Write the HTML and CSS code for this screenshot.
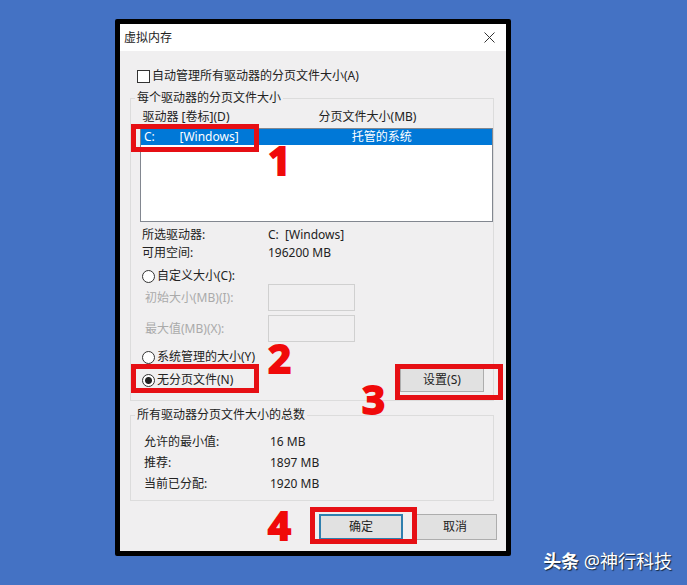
FILE: index.html
```html
<!DOCTYPE html>
<html lang="zh-CN">
<head>
    <meta charset="UTF-8">
    <title>虚拟内存</title>
    <link rel="stylesheet" href="styles.css">
</head>
<body>
<form class="dialog">
    <div class="title-bar">
        <span>虚拟内存</span>
        <button type="button" class="close" aria-label="关闭">
            <svg width="11" height="11" viewBox="0 0 11 11"><path d="M0.5 0.5L10.5 10.5M10.5 0.5L0.5 10.5" stroke="#333" fill="none"/></svg>
        </button>
    </div>
    <div class="content">
        <label class="option auto"><input type="checkbox">自动管理所有驱动器的分页文件大小(A)</label>

        <fieldset class="drives">
            <legend>每个驱动器的分页文件大小</legend>
            <div class="inner">
                <div class="marked">
                    <table class="drive-list">
                        <colgroup><col class="col-letter"><col class="col-label"><col></colgroup>
                        <thead>
                            <tr><th class="drive" colspan="2">驱动器 [卷标](D)</th><th>分页文件大小(MB)</th></tr>
                        </thead>
                        <tbody>
                            <tr class="selected"><td>C:</td><td>[Windows]</td><td class="size">托管的系统</td></tr>
                            <tr class="empty"><td colspan="3"></td></tr>
                        </tbody>
                    </table>
                    <div class="mark mark-drive"></div>
                    <span class="step step-1">1</span>
                </div>

                <dl class="info">
                    <dt>所选驱动器:</dt><dd>C:&nbsp; [Windows]</dd>
                    <dt>可用空间:</dt><dd>196200 MB</dd>
                </dl>

                <label class="option custom"><input type="radio" name="mode">自定义大小(C):</label>
                <div class="sizes">
                    <label for="initial">初始大小(MB)(I):</label><input type="text" id="initial" disabled>
                    <label for="maximum">最大值(MB)(X):</label><input type="text" id="maximum" disabled>
                </div>
                <label class="option managed"><input type="radio" name="mode">系统管理的大小(Y)</label>
                <div class="last-row">
                    <div class="marked">
                        <label class="option"><input type="radio" name="mode" checked>无分页文件(N)</label>
                        <div class="mark mark-none"></div>
                        <span class="step step-2">2</span>
                    </div>
                    <div class="marked">
                        <button type="button">设置(S)</button>
                        <div class="mark mark-set"></div>
                        <span class="step step-3">3</span>
                    </div>
                </div>
            </div>
        </fieldset>

        <fieldset class="totals">
            <legend>所有驱动器分页文件大小的总数</legend>
            <dl class="info">
                <dt>允许的最小值:</dt><dd>16 MB</dd>
                <dt>推荐:</dt><dd>1897 MB</dd>
                <dt>当前已分配:</dt><dd>1920 MB</dd>
            </dl>
        </fieldset>

        <div class="buttons">
            <div class="marked">
                <button type="button" class="default">确定</button>
                <div class="mark mark-ok"></div>
                <span class="step step-4">4</span>
            </div>
            <button type="button">取消</button>
        </div>
    </div>
</form>
<div class="watermark"><b>头条</b> @神行科技</div>
</body>
</html>
```
FILE: styles.css
```css
* {
    box-sizing: border-box;
}
body {
    margin: 0;
    padding: 19px 176px 28px 115px;
    background: #4472c4;
    color: #222;
    font-family: "Noto Sans", "Noto Sans CJK SC", sans-serif;
    font-size: 12px;
    line-height: 16px;
}
.dialog {
    border: 5px solid #000;
    border-radius: 2px;
    background: #f0eff0;
}
.title-bar {
    display: flex;
    justify-content: space-between;
    align-items: center;
    height: 27px;
    padding: 0 11px 0 4px;
    background: #fff;
}
.title-bar .close {
    display: flex;
    width: auto;
    height: auto;
    padding: 0;
    border: none;
    background: none;
}
.content {
    padding: 17px 9px 11px 10px;
}
.option {
    display: flex;
    align-items: center;
    gap: 2px;
    height: 16px;
    white-space: nowrap;
}
.option input {
    appearance: none;
    width: 13px;
    height: 13px;
    margin: 0;
    border: 1px solid #333;
    background: #fff;
}
.option input[type="radio"] {
    border-radius: 50%;
}
.option input[type="radio"]:checked {
    background: radial-gradient(circle, #222 3px, #fff 4px);
}
.auto {
    margin-left: 7px;
}

/* group boxes */
fieldset {
    min-width: 0;
    margin: 6px 3px 0 0;
    padding: 0 0 8px 4px;
    border: 1px solid #dcdcdc;
}
legend {
    padding: 0 2px;
}
.inner {
    margin-left: 5px;
}
.drive-list {
    width: 100%;
    border-collapse: collapse;
    table-layout: fixed;
}
.col-letter {
    width: 36px;
}
.col-label {
    width: 66px;
}
.drive-list th {
    height: 22px;
    padding: 0;
    font-weight: normal;
}
.drive-list .drive {
    padding-left: 2px;
    text-align: left;
}
.drive-list tbody {
    border: 1px solid #828790;
    background: #fff;
}
.drive-list td {
    padding: 0 3px;
}
.drive-list .selected {
    height: 16px;
    background: #0078d7;
    color: #fff;
}
.drive-list .size {
    padding-left: 32px;
    text-align: center;
}
.drive-list .empty {
    height: 77px;
}
.info {
    display: grid;
    grid-template-columns: 126px 1fr;
    grid-auto-rows: 18px;
    align-items: center;
    margin: 4px 0 0 2px;
}
.info dd {
    margin: 0;
}
.custom {
    margin: 6px 0 0 2px;
}
.sizes {
    display: grid;
    grid-template-columns: 123px 87px;
    grid-auto-rows: 27px;
    row-gap: 4px;
    align-items: center;
    margin-left: 5px;
    color: #aaa;
}
.sizes input {
    width: 100%;
    height: 27px;
    border: 1px solid #d0d0d0;
    background: #f0eff0;
}
.managed {
    margin: 7px 0 0 2px;
}
.last-row {
    display: flex;
    justify-content: space-between;
    align-items: center;
    margin: 3px 9px 0 2px;
}
.totals {
    padding-bottom: 6px;
}
.totals .info {
    grid-auto-rows: 21px;
    margin: 8px 0 0 9px;
}

button {
    width: 84px;
    height: 24px;
    padding: 0;
    border: 1px solid #adadad;
    background: #e1e1e1;
    color: #222;
    font: inherit;
}
.buttons {
    display: flex;
    justify-content: flex-end;
    gap: 10px;
    margin-top: 13px;
}
.buttons button {
    display: block;
    height: 26px;
}
.buttons .default {
    border: 2px solid #2f7fae;
}

/* red boxes and step numbers laid over the controls */
.marked {
    position: relative;
}
.mark {
    position: absolute;
    border: 5px solid #e60f14;
    pointer-events: none;
}
.mark-drive {
    top: 18px;
    left: -9px;
    width: 128px;
    height: 28px;
}
.mark-none {
    top: -8px;
    left: -11px;
    width: 128px;
    height: 29px;
}
.mark-set {
    top: -4px;
    right: -19px;
    width: 108px;
    height: 36px;
}
.mark-ok {
    inset: -7px -14px -4px -9px;
}
.step {
    position: absolute;
    color: #f00a0a;
    font-family: "Open Sans", sans-serif;
    font-size: 40px;
    font-weight: 700;
    line-height: 42px;
    -webkit-text-stroke: 2px #f00a0a;
}
.step-1 {
    top: 33px;
    left: 128px;
}
.step-2 {
    top: -35px;
    left: 126px;
}
.step-3 {
    top: 10px;
    left: -38px;
}
.step-4 {
    top: -10px;
    left: -51px;
}
.watermark {
    position: absolute;
    right: 15px;
    bottom: 14px;
    color: #fff;
    font-size: 18px;
    line-height: 20px;
    text-shadow: 1px 1px 1px #123;
}
```
